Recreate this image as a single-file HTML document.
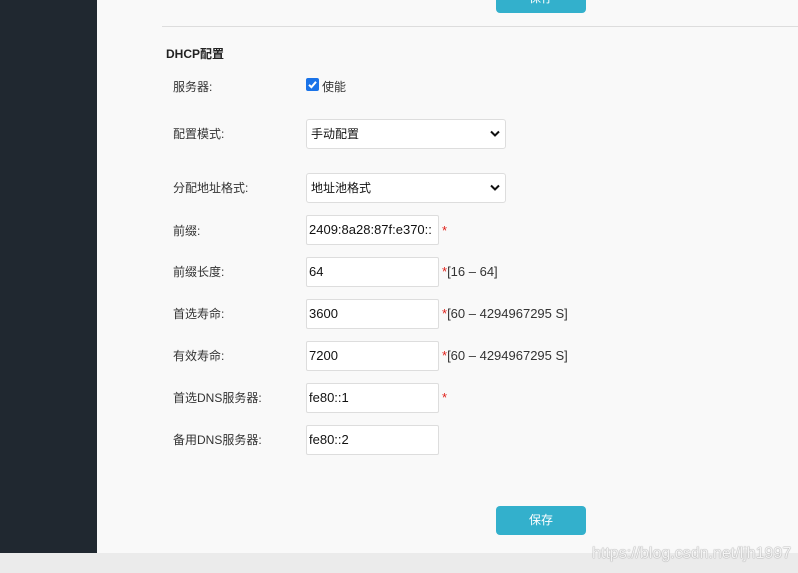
<!DOCTYPE html>
<html><head><meta charset="utf-8"><style>
body{margin:0;width:798px;height:573px;overflow:hidden;background:#f9f9f9;font-family:"Liberation Sans","Noto Sans CJK SC",sans-serif;font-size:12px;color:#333;position:relative}
.a{position:absolute}
.side{left:0;top:0;width:97px;height:553px;background:#202830}
.btn{background:#33b0cc;color:#fff;border-radius:4px;width:90px;text-align:center;font-size:12px;left:496px}
.lbl{left:173px;line-height:16px;transform:translateY(-7px)}
.in{left:306px;width:129px;height:28px;background:#fff;border:1px solid #ddd;border-radius:2px;line-height:28px;padding-left:2px;box-sizing:content-box;color:#111;font-size:13px}
.sel{left:306px;width:198px;height:28px;background:#fff;border:1px solid #ddd;border-radius:3px;line-height:28px;color:#111;font-size:12px}
.sel span{position:absolute;left:4px}
.sel svg{position:absolute;right:5px;top:10px}
.hint{left:442px;line-height:16px;transform:translateY(-7px);color:#333;font-size:13px}
.hint b{color:#e0201a;font-weight:normal}
</style></head><body>
<div class="a side"></div>
<div class="a btn" style="top:-16px;height:29px;line-height:29px">保存</div>
<div class="a" style="left:162px;top:26px;width:636px;height:1px;background:#ddd"></div>
<div class="a" style="left:166px;top:45px;font-size:12px;font-weight:bold;color:#222">DHCP配置</div>
<div class="a lbl" style="top:86px">服务器:</div>
<div class="a" style="left:306px;top:78px;width:13px;height:13px;background:#1a73e8;border-radius:2px"><svg width="13" height="13"><path d="M3 6.8l2.4 2.4L10 3.8" stroke="#fff" stroke-width="2" fill="none"/></svg></div>
<div class="a lbl" style="left:322px;top:86px">使能</div>
<div class="a lbl" style="top:133px">配置模式:</div>
<div class="a sel" style="top:119px"><span>手动配置</span><svg width="10" height="8"><path d="M1 1.5l4 4 4-4" stroke="#111" stroke-width="2" fill="none"/></svg></div>
<div class="a lbl" style="top:187px">分配地址格式:</div>
<div class="a sel" style="top:173px"><span>地址池格式</span><svg width="10" height="8"><path d="M1 1.5l4 4 4-4" stroke="#111" stroke-width="2" fill="none"/></svg></div>
<div class="a lbl" style="top:230px">前缀:</div>
<div class="a in" style="top:215px">2409:8a28:87f:e370::</div>
<div class="a hint" style="top:230px"><b>*</b></div>
<div class="a lbl" style="top:271px">前缀长度:</div>
<div class="a in" style="top:257px">64</div>
<div class="a hint" style="top:271px"><b>*</b>[16 – 64]</div>
<div class="a lbl" style="top:313px">首选寿命:</div>
<div class="a in" style="top:299px">3600</div>
<div class="a hint" style="top:313px"><b>*</b>[60 – 4294967295 S]</div>
<div class="a lbl" style="top:355px">有效寿命:</div>
<div class="a in" style="top:341px">7200</div>
<div class="a hint" style="top:355px"><b>*</b>[60 – 4294967295 S]</div>
<div class="a lbl" style="top:397px">首选DNS服务器:</div>
<div class="a in" style="top:383px">fe80::1</div>
<div class="a hint" style="top:397px"><b>*</b></div>
<div class="a lbl" style="top:439px">备用DNS服务器:</div>
<div class="a in" style="top:425px">fe80::2</div>
<div class="a btn" style="top:506px;height:29px;line-height:29px">保存</div>
<div class="a" style="left:0;top:553px;width:798px;height:20px;background:#ebebeb"></div>
<div class="a" style="left:592px;top:545px;font-size:16px;color:#f4f4f4;text-shadow:0 0 1px #999,0 0 1px #999">https://blog.csdn.net/ljh1997</div>
</body></html>
